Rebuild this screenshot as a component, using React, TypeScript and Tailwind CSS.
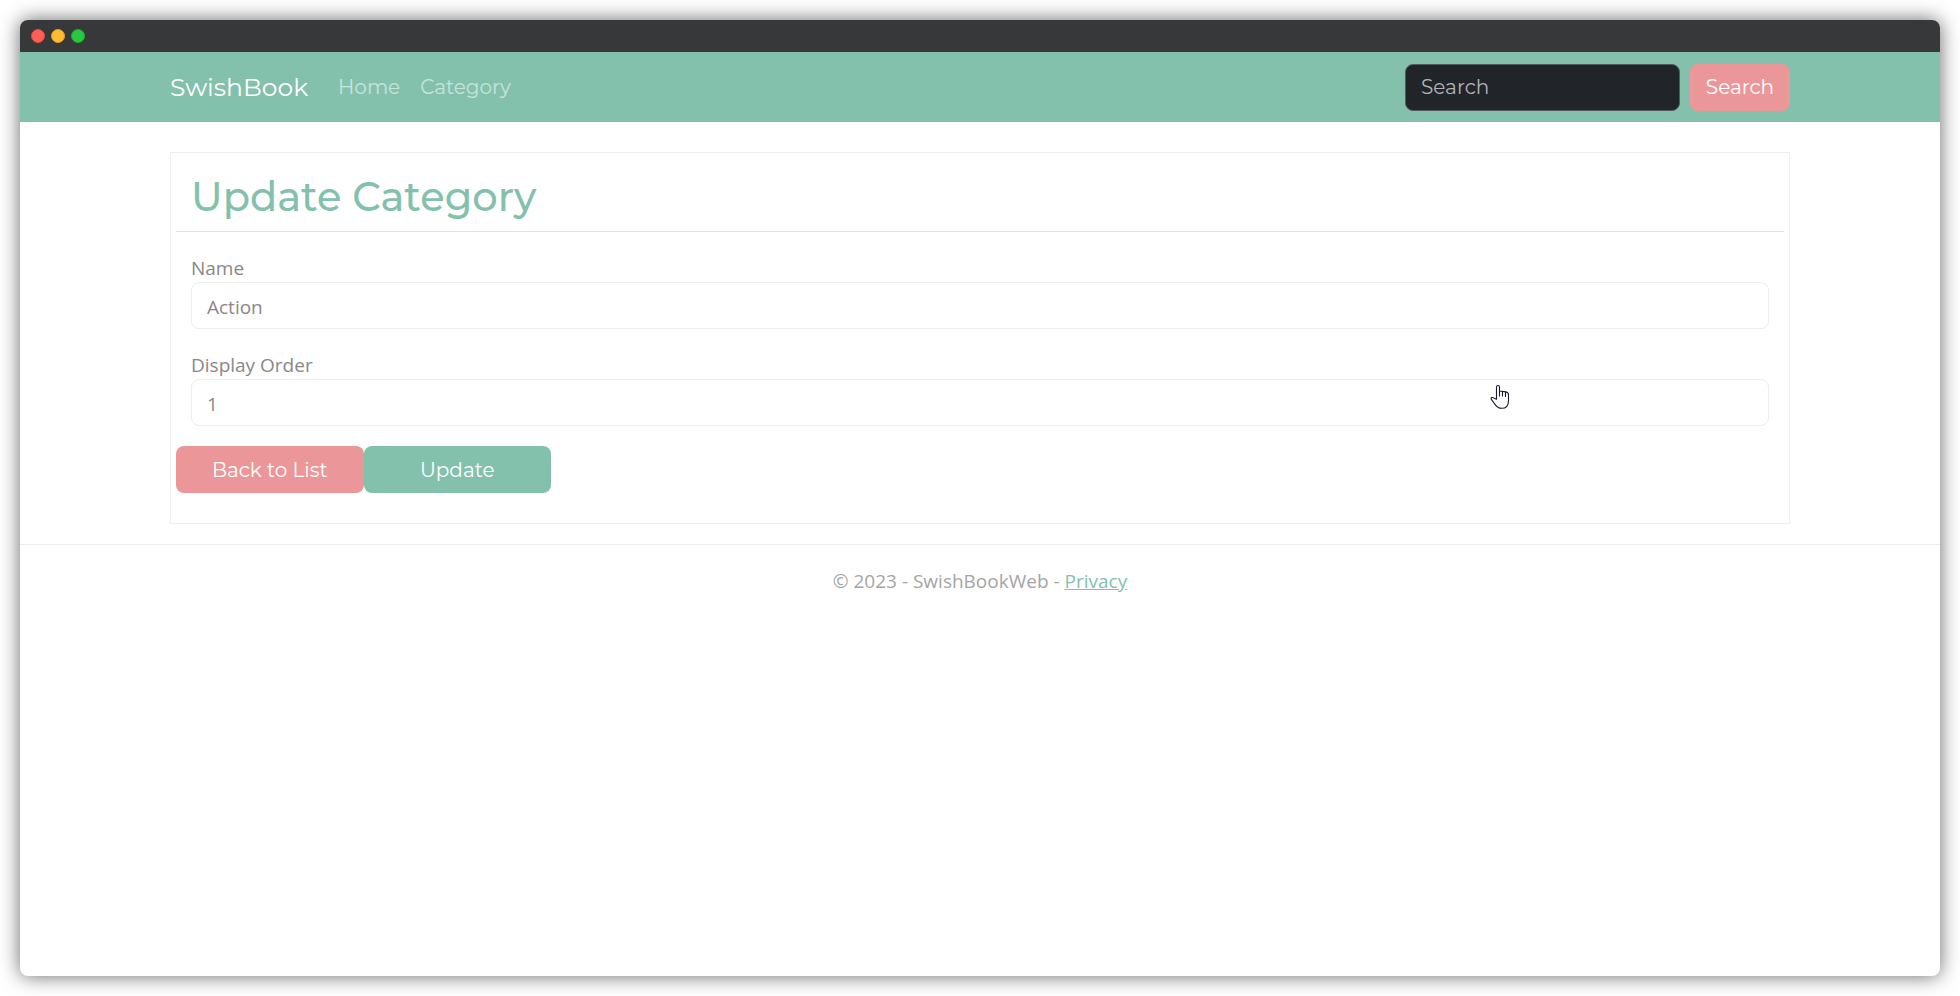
import React from "react";

const container = "mx-auto w-full max-w-[1620px]";
const body = "font-['Open_Sans','Noto_Sans',sans-serif]";
const display = "font-['Montserrat','Inter','Open_Sans',sans-serif]";
const label = "block text-[19px] leading-[28px] text-[#888888]";
const field =
  "h-[47px] w-full rounded-lg border border-[#eceeef] bg-white px-[15px] pt-[2px] text-[19px] leading-[30px] text-[#888888] outline-none";

function PointerHand() {
  return (
    <svg
      className="pointer-events-none absolute top-[5px] right-[259px] h-[26px] w-[20px]"
      viewBox="0 0 20 26"
      fill="#ffffff"
      stroke="#1b1b2b"
      strokeWidth="1.1"
      strokeLinejoin="round"
      strokeLinecap="round"
      aria-hidden="true"
    >
      <path d="M6.5 15.200V3c0-.9.6-1.500 1.500-1.500s1.500.6 1.500 1.500v4l6.300.9c1.800.3 2.700 1.300 2.700 3v5.500c0 4.900-2.700 7.900-6.900 7.900-3 0-4.900-1.400-6.600-3.900L1.500 15.700c-.6-1-.5-1.800.2-2.100.9-.4 1.800 0 2.500.6z" />
      <path d="M9.500 7v5M12.500 7.500v4.500M15.500 8v4.500" fill="none" />
    </svg>
  );
}

function TitleBar() {
  return (
    <div className="flex h-8 items-center gap-[6px] bg-[#373839] px-[11px]">
      <span className="size-[14px] rounded-full border border-[#e24b41] bg-[#ff5f57]" />
      <span className="size-[14px] rounded-full border border-[#e1a325] bg-[#febc2e]" />
      <span className="size-[14px] rounded-full border border-[#1fab32] bg-[#28c840]" />
    </div>
  );
}

function NavBar() {
  return (
    <nav className={`${display} bg-[#83c1ac]`}>
      <div className={`${container} flex h-[70px] items-center`}>
        <a href="#" className="text-[25px] leading-[38px] text-white">
          SwishBook
        </a>
        <div className="ml-[30px] flex gap-5 text-[20px] leading-[30px] text-white/55">
          <a href="#home">Home</a>
          <a href="#category">Category</a>
        </div>
        <form className="ml-auto flex gap-[10px]" onSubmit={(e) => e.preventDefault()}>
          <input
            type="search"
            aria-label="Search"
            placeholder="Search"
            className="h-[47px] w-[275px] rounded-lg border border-[#55595c] bg-[#212529] px-[15px] text-[20px] text-white outline-none placeholder:text-[#b0b3b5]"
          />
          <button type="submit" className="h-[47px] w-[100px] rounded-lg bg-[#eb9799] text-[20px] text-white">
            Search
          </button>
        </form>
      </div>
    </nav>
  );
}

function CategoryForm() {
  return (
    <form
      className="border border-[#eceeef] px-[5px] pb-[30px]"
      onSubmit={(e) => e.preventDefault()}
    >
      <h1 className={`${display} border-b border-[#dfe1e2] px-[15px] pt-[20px] pb-[10px] text-[40px] leading-[48px] font-medium text-[#83c1ac]`}>
        Update Category
      </h1>
      <div className="flex flex-col gap-[22px] px-[15px] pt-[22px]">
        <div>
          <label htmlFor="name" className={label}>
            Name
          </label>
          <input id="name" type="text" defaultValue="Action" className={field} />
        </div>
        <div>
          <label htmlFor="order" className={label}>
            Display Order
          </label>
          <div className="relative">
            <input id="order" type="text" defaultValue="1" className={field} />
            <PointerHand />
          </div>
        </div>
      </div>
      <div className={`${display} mt-5 grid max-w-[375px] grid-cols-2 text-[20px] text-white`}>
        <a href="#category" className="flex h-[47px] items-center justify-center rounded-lg bg-[#eb9799]">
          Back to List
        </a>
        <button type="submit" className="h-[47px] rounded-lg bg-[#83c1ac]">
          Update
        </button>
      </div>
    </form>
  );
}

export default function App() {
  return (
    <div className="min-h-screen bg-white p-5">
      <div
        className={`${body} flex min-h-[calc(100vh-40px)] flex-col overflow-hidden rounded-lg bg-white shadow-[0_0_20px_rgba(0,0,0,0.6)]`}
      >
        <TitleBar />
        <NavBar />
        <main className={`${container} pt-[30px] pb-5`}>
          <CategoryForm />
        </main>
        <footer className="border-t border-[#eceeef] pt-[21px] text-center text-[19px] leading-[30px] text-[#a5a5a5]">
          © 2023 - SwishBookWeb -{" "}
          <a href="#privacy" className="text-[#83c1ac] underline">
            Privacy
          </a>
        </footer>
      </div>
    </div>
  );
}
